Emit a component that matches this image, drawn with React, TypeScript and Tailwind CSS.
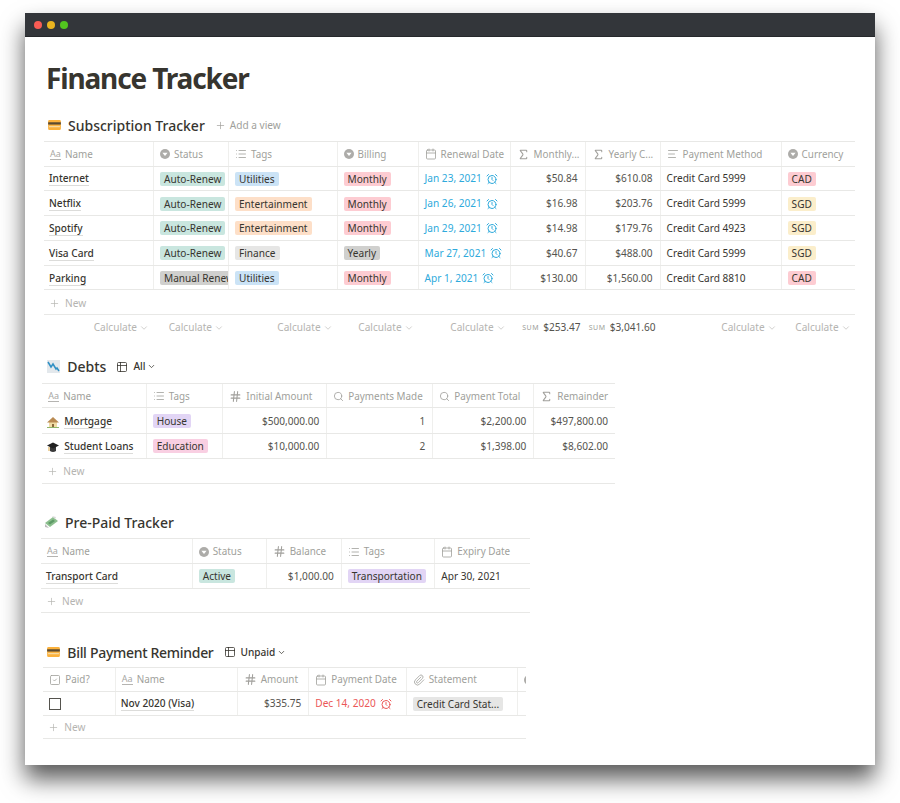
import React from "react";
import {
  AlarmClock,
  AlignLeft,
  Calendar,
  ChevronDown,
  Hash,
  List,
  Paperclip,
  Plus,
  Search,
  Sigma,
  SquareCheck,
  Table2,
} from "lucide-react";

const pillColors = {
  teal: "bg-[#c9e6df]",
  blue: "bg-[#cbe3f6]",
  orange: "bg-[#fddfc8]",
  red: "bg-[#fdccd2]",
  gray: "bg-[#e6e6e5]",
  dark: "bg-[#d0d0ce]",
  yellow: "bg-[#fbeecb]",
  purple: "bg-[#e2d5f5]",
  pink: "bg-[#f9cfe2]",
};

function Pill({ color, children }: { color: keyof typeof pillColors; children: React.ReactNode }) {
  return (
    <span className={`h-[14px] shrink-0 rounded-[2px] px-[4px] leading-[14px] whitespace-nowrap ${pillColors[color]}`}>
      {children}
    </span>
  );
}

function Title({ children, icon }: { children: React.ReactNode; icon?: React.ReactNode }) {
  return (
    <div className="-ml-[1px] flex items-center gap-[5px] pt-[1px]">
      {icon}
      <span className="border-b border-[#dcdcda] leading-[13px] font-medium">{children}</span>
    </div>
  );
}

function Num({ children }: { children: React.ReactNode }) {
  return <span className="w-full pr-[1px] text-right text-[#55534e]">{children}</span>;
}

function DateCell({ children, alert }: { children: React.ReactNode; alert?: boolean }) {
  return (
    <span className={`flex items-center gap-[4px] whitespace-nowrap ${alert ? "text-[#eb5757]" : "text-[#2eaadc]"}`}>
      {children}
      <AlarmClock size={12} strokeWidth={2} />
    </span>
  );
}

function SelectIcon() {
  return (
    <svg viewBox="0 0 10 10" className="size-[10px] shrink-0">
      <circle cx="5" cy="5" r="5" fill="#adaca9" />
      <path d="M2.4 3.8h5.2L5 7z" fill="#fff" />
    </svg>
  );
}

function NameIcon() {
  return (
    <span className="w-[11px] shrink-0 border-b border-[#b5b4b1] text-[9px] leading-[10px] text-[#a8a7a4]">Aa</span>
  );
}

const headIcons: Record<string, React.ReactNode> = {
  name: <NameIcon />,
  select: <SelectIcon />,
  tags: <List size={12} strokeWidth={1.6} className="shrink-0" />,
  date: <Calendar size={12} strokeWidth={1.6} className="shrink-0" />,
  sum: <Sigma size={13} strokeWidth={1.9} className="shrink-0" />,
  text: <AlignLeft size={12} strokeWidth={1.6} className="shrink-0" />,
  hash: <Hash size={13} strokeWidth={1.9} className="shrink-0" />,
  search: <Search size={11} strokeWidth={1.8} className="shrink-0" />,
  file: <Paperclip size={12} strokeWidth={1.6} className="shrink-0" />,
  check: <SquareCheck size={12} strokeWidth={1.6} className="shrink-0" />,
};

function CardEmoji() {
  return (
    <svg viewBox="0 0 14 11" className="h-[10px] w-[13px] shrink-0">
      <rect width="14" height="11" rx="1.5" fill="#fbb13c" />
      <rect y="2.5" width="14" height="2.5" fill="#5a4a32" />
      <rect x="1" y="6.5" width="12" height="1.5" fill="#f6d9a0" />
    </svg>
  );
}

function ChartEmoji() {
  return (
    <svg viewBox="0 0 13 13" className="size-[13px] shrink-0">
      <rect width="13" height="13" fill="#e3e8ec" />
      <path d="M1 2l3 5 2-3 3 5 1-1 2 3" fill="none" stroke="#2f8fc4" strokeWidth="1.5" />
    </svg>
  );
}

function HouseEmoji() {
  return (
    <svg viewBox="0 0 12 12" className="size-[12px] shrink-0">
      <path d="M0 11h12v1H0z" fill="#8fb56a" />
      <path d="M2 6h8v5H2z" fill="#f1dca4" />
      <path d="M0 6.500L6 1l6 5.500z" fill="#b98a52" />
      <path d="M5 8h2v3H5z" fill="#8a6a3c" />
    </svg>
  );
}

function CapEmoji() {
  return (
    <svg viewBox="0 0 12 12" className="size-[12px] shrink-0">
      <path d="M3 6h6v4q-3 2-6 0z" fill="#3a3a3a" />
      <path d="M0 4.500L6 1.500l6 3-6 3z" fill="#222" />
      <path d="M2 6v4" stroke="#d9a441" strokeWidth="1" />
    </svg>
  );
}

function MoneyEmoji() {
  return (
    <svg viewBox="0 0 13 12" className="h-[12px] w-[13px] shrink-0">
      <path d="M0 7l8-6 5 4-8 6z" fill="#8cbf8e" />
      <path d="M3 7l5-3.500 2 1.600-5 3.500z" fill="#5d9a66" />
      <path d="M7 0l4 1-1 2z" fill="#d8d8d8" />
      <path d="M0 8l3 3 1 1-4-1z" fill="#b9b9b9" />
    </svg>
  );
}

type TableProps = {
  cols: string;
  width: string;
  heads: [string, string][];
  rows: React.ReactNode[][];
  calc?: React.ReactNode[];
  headH?: string;
  rowH?: string;
  newH?: string;
};

function Table({ cols, width, heads, rows, calc, headH = "h-[24.5px]", rowH = "h-[24.8px]", newH = "h-[24.8px]" }: TableProps) {
  return (
    <div className={`border-t border-[#e8e8e6] ${width}`}>
      <div className={`grid border-b border-[#e8e8e6] text-[9.9px] text-[#a09f9b] ${headH} ${cols}`}>
        {heads.map(([icon, label], i) => (
          <div key={i} className="flex items-center gap-[4px] overflow-hidden border-r border-[#efefed] pt-[1px] pl-[6px] whitespace-nowrap last:border-r-0">
            {headIcons[icon]}
            {label && <span>{label}</span>}
          </div>
        ))}
      </div>
      {rows.map((row, r) => (
        <div key={r} className={`grid border-b border-[#e8e8e6] ${rowH} ${cols}`}>
          {row.map((cell, i) => (
            <div key={i} className="flex items-center overflow-hidden border-r border-[#efefed] px-[6px] pt-[1px] whitespace-nowrap last:border-r-0">
              {cell}
            </div>
          ))}
        </div>
      ))}
      <div className={`flex items-center gap-[5px] border-b border-[#e8e8e6] pt-[2px] pl-[5px] text-[#b5b4b1] ${newH}`}>
        <Plus size={11} strokeWidth={1.5} />
        New
      </div>
      {calc && (
        <div className={`grid h-[24px] pt-[1px] text-[#b5b4b1] ${cols}`}>
          {calc.map((cell, i) => (
            <div key={i} className="flex items-center justify-end gap-[2px] pr-[5px] whitespace-nowrap">
              {cell || (
                <>
                  Calculate
                  <ChevronDown size={10} strokeWidth={1.5} />
                </>
              )}
            </div>
          ))}
        </div>
      )}
    </div>
  );
}

function Sum({ value }: { value: string }) {
  return (
    <span className="flex items-center gap-[4px]">
      <span className="text-[7px] tracking-[0.6px] text-[#a09f9b]">SUM</span>
      <span className="text-[#55534e]">{value}</span>
    </span>
  );
}

function Heading({
  emoji,
  title,
  slim,
  children,
}: {
  emoji: React.ReactNode;
  title: string;
  slim?: boolean;
  children?: React.ReactNode;
}) {
  return (
    <div className="flex h-[24px] items-center">
      <span className="flex w-[20px] justify-start">{emoji}</span>
      <h2 className={`text-[14px] font-medium ${slim ? "tracking-[-0.3px]" : ""}`}>{title}</h2>
      {children}
    </div>
  );
}

function ViewPicker({ label }: { label: string }) {
  return (
    <div className="ml-[10px] flex items-center gap-[5px] font-medium">
      <Table2 size={12} strokeWidth={1.6} />
      {label}
      <ChevronDown size={9} strokeWidth={2} className="-ml-[3px]" />
    </div>
  );
}

const subRows = [
  ["Internet", "teal", "Auto-Renew", "blue", "Utilities", "red", "Monthly", "Jan 23, 2021", "$50.84", "$610.08", "Credit Card 5999", "red", "CAD"],
  ["Netflix", "teal", "Auto-Renew", "orange", "Entertainment", "red", "Monthly", "Jan 26, 2021", "$16.98", "$203.76", "Credit Card 5999", "yellow", "SGD"],
  ["Spotify", "teal", "Auto-Renew", "orange", "Entertainment", "red", "Monthly", "Jan 29, 2021", "$14.98", "$179.76", "Credit Card 4923", "yellow", "SGD"],
  ["Visa Card", "teal", "Auto-Renew", "gray", "Finance", "dark", "Yearly", "Mar 27, 2021", "$40.67", "$488.00", "Credit Card 5999", "yellow", "SGD"],
  ["Parking", "dark", "Manual Renew", "blue", "Utilities", "red", "Monthly", "Apr 1, 2021", "$130.00", "$1,560.00", "Credit Card 8810", "red", "CAD"],
] as const;

export default function App() {
  return (
    <div className="h-[803px] w-[900px] overflow-hidden bg-white pt-[13px] pl-[25px] font-['Noto_Sans',sans-serif] text-[10.1px] text-[#37352f]">
      <div className="h-[752px] w-[850px] bg-white shadow-[0_14px_22px_rgba(0,0,0,0.65)]">
        <div className="flex h-[24px] items-center gap-[5px] border-b border-[#26282b] bg-[#33363a] pl-[9px]">
          <span className="size-[8px] rounded-full bg-[#f95c54]" />
          <span className="size-[8px] rounded-full bg-[#ebb51f]" />
          <span className="size-[8px] rounded-full bg-[#52c41f]" />
        </div>

        <h1 className="mt-[21px] ml-[21px] h-[40px] text-[28px] leading-[40px] font-bold tracking-[-1.15px]">Finance Tracker</h1>

        <section className="mt-[15px] ml-[19px]">
          <div className="pl-[4px]">
            <Heading emoji={<CardEmoji />} title="Subscription Tracker">
              <span className="ml-[10px] flex items-center gap-[4px] pt-[1px] text-[#a09f9b]">
                <Plus size={11} strokeWidth={1.5} />
                Add a view
              </span>
            </Heading>
          </div>
          <div className="mt-[4px]">
            <Table
              cols="grid-cols-[110px_75px_108.6px_81px_92px_75px_75px_121px_74px]"
              width="w-[811px]"
              heads={[
                ["name", "Name"],
                ["select", "Status"],
                ["tags", "Tags"],
                ["select", "Billing"],
                ["date", "Renewal Date"],
                ["sum", "Monthly..."],
                ["sum", "Yearly C..."],
                ["text", "Payment Method"],
                ["select", "Currency"],
              ]}
              rows={subRows.map((r) => [
                <Title>{r[0]}</Title>,
                <Pill color={r[1]}>{r[2]}</Pill>,
                <Pill color={r[3]}>{r[4]}</Pill>,
                <Pill color={r[5]}>{r[6]}</Pill>,
                <DateCell>{r[7]}</DateCell>,
                <Num>{r[8]}</Num>,
                <Num>{r[9]}</Num>,
                <span>{r[10]}</span>,
                <Pill color={r[11]}>{r[12]}</Pill>,
              ])}
              calc={[null, null, null, null, null, <Sum value="$253.47" />, <Sum value="$3,041.60" />, null, null]}
            />
          </div>
        </section>

        <section className="mt-[15.7px] ml-[17.3px]">
          <div className="pl-[5px]">
            <Heading emoji={<ChartEmoji />} title="Debts">
              <ViewPicker label="All" />
            </Heading>
          </div>
          <div className="mt-[4px]">
            <Table
              cols="grid-cols-[104.4px_76.6px_104px_106px_101px_80.7px]"
              width="w-[572.7px]"
              rowH="h-[25.3px]"
              heads={[
                ["name", "Name"],
                ["tags", "Tags"],
                ["hash", "Initial Amount"],
                ["search", "Payments Made"],
                ["search", "Payment Total"],
                ["sum", "Remainder"],
              ]}
              rows={[
                [
                  <Title icon={<HouseEmoji />}>Mortgage</Title>,
                  <Pill color="purple">House</Pill>,
                  <Num>$500,000.00</Num>,
                  <Num>1</Num>,
                  <Num>$2,200.00</Num>,
                  <Num>$497,800.00</Num>,
                ],
                [
                  <Title icon={<CapEmoji />}>Student Loans</Title>,
                  <Pill color="pink">Education</Pill>,
                  <Num>$10,000.00</Num>,
                  <Num>2</Num>,
                  <Num>$1,398.00</Num>,
                  <Num>$8,602.00</Num>,
                ],
              ]}
            />
          </div>
        </section>

        <section className="mt-[26.5px] ml-[16px]">
          <div className="pl-[4px]">
            <Heading emoji={<MoneyEmoji />} title="Pre-Paid Tracker" />
          </div>
          <div className="mt-[4px]">
            <Table
              cols="grid-cols-[151.7px_74px_75px_93.6px_94.7px]"
              width="w-[489px]"
              newH="h-[24px]"
              heads={[
                ["name", "Name"],
                ["select", "Status"],
                ["hash", "Balance"],
                ["tags", "Tags"],
                ["date", "Expiry Date"],
              ]}
              rows={[
                [
                  <Title>Transport Card</Title>,
                  <Pill color="teal">Active</Pill>,
                  <Num>$1,000.00</Num>,
                  <Pill color="purple">Transportation</Pill>,
                  <span>Apr 30, 2021</span>,
                ],
              ]}
            />
          </div>
        </section>

        <section className="mt-[27.5px] ml-[18.3px]">
          <div className="pl-[4px]">
            <Heading emoji={<CardEmoji />} title="Bill Payment Reminder" slim>
              <ViewPicker label="Unpaid" />
            </Heading>
          </div>
          <div className="mt-[3px]">
            <Table
              cols="grid-cols-[72.4px_122px_71.6px_97.4px_111px_8.3px]"
              width="w-[482.7px]"
              headH="h-[23.5px]"
              rowH="h-[24.3px]"
              newH="h-[23px]"
              heads={[
                ["check", "Paid?"],
                ["name", "Name"],
                ["hash", "Amount"],
                ["date", "Payment Date"],
                ["file", "Statement"],
                ["select", ""],
              ]}
              rows={[
                [
                  <span className="size-[12px] border-[1.5px] border-[#55534e]" />,
                  <Title>Nov 2020 (Visa)</Title>,
                  <Num>$335.75</Num>,
                  <DateCell alert>Dec 14, 2020</DateCell>,
                  <Pill color="gray">Credit Card Stat...</Pill>,
                  null,
                ],
              ]}
            />
          </div>
        </section>
      </div>
    </div>
  );
}
